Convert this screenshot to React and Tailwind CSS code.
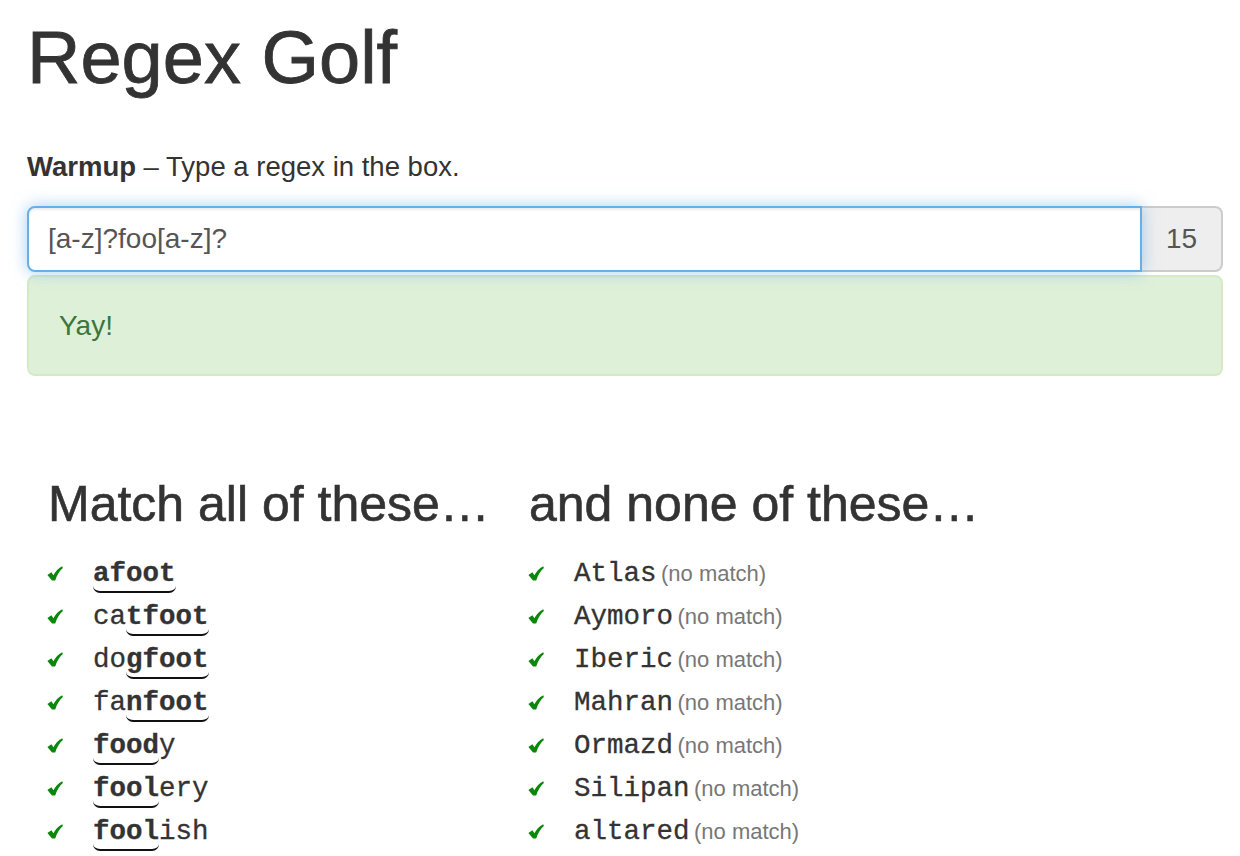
import React from "react";

const matches = [
  ["", "afoot", ""],
  ["ca", "tfoot", ""],
  ["do", "gfoot", ""],
  ["fa", "nfoot", ""],
  ["", "food", "y"],
  ["", "fool", "ery"],
  ["", "fool", "ish"],
];

const nonMatches = ["Atlas", "Aymoro", "Iberic", "Mahran", "Ormazd", "Silipan", "altared"];

function Check() {
  return (
    <span className="inline-block w-[45px] align-baseline">
      <svg width="16" height="15" viewBox="0 0 16 15" className="inline-block translate-x-[-1px] translate-y-[-3px]">
        <path
          d="M0.4 9 L4.4 6.2 L6.4 9.2 C8.6 5.4 11.2 2.4 15.2 0.3 L15.9 1.9 C12.6 4.7 10 8.6 8.2 14.4 L5 14.6 Z"
          fill="#0b870b"
        />
      </svg>
    </span>
  );
}

export default function App() {
  return (
    <div className="bg-white text-[#333333] font-['Liberation_Sans',Arial,sans-serif] pl-[27px] w-[1223px] min-h-[856px]">
      <h1 className="pt-[18px] text-[74px] leading-[80px] font-medium [-webkit-text-stroke:0.8px_#333333]">Regex Golf</h1>
      <p className="mt-[49px] text-[27.5px] leading-[40px]">
        <b className="font-bold">Warmup</b> – Type a regex in the box.
      </p>
      <div className="mt-[19px] flex h-[66px]">
        <div className="relative z-10 flex-1 flex items-center bg-white border-2 border-[#66afe9] rounded-l-[8px] pl-[19px] text-[28px] text-[#555555] shadow-[0_0_16px_rgba(102,175,233,0.6),inset_0_2px_2px_rgba(0,0,0,0.075)]">
          [a-z]?foo[a-z]?
        </div>
        <div className="w-[81px] flex items-center justify-center bg-[#eeeeee] border-2 border-l-0 border-[#cccccc] rounded-r-[8px] text-[28px] text-[#555555]">
          15
        </div>
      </div>
      <div className="mt-[3px] h-[101px] flex items-center bg-[#dff0d8] border-2 border-[#d6e9c6] rounded-[8px] pl-[30px] text-[28px] text-[#3c763d]">
        Yay!
      </div>
      <div className="mt-[98px] grid grid-cols-[481px_1fr] pl-[21px]">
        <div>
          <h2 className="text-[50px] leading-[60px] font-medium [-webkit-text-stroke:0.6px_#333333]">Match all of these…</h2>
          <ul className="mt-[18px]">
            {matches.map(([a, b, c], i) => (
              <li key={i} className="h-[43px] leading-[43px] whitespace-nowrap">
                <Check />
                <span className="font-['Liberation_Mono','Courier_New',monospace] text-[27.5px] [-webkit-text-stroke:0.3px_#333333]">
                  {a}
                  <span className="font-bold border-b-2 border-[#111111] rounded-b-[7px] pb-[2px]">{b}</span>
                  {c}
                </span>
              </li>
            ))}
          </ul>
        </div>
        <div>
          <h2 className="text-[50px] leading-[60px] font-medium [-webkit-text-stroke:0.6px_#333333]">and none of these…</h2>
          <ul className="mt-[18px]">
            {nonMatches.map((w, i) => (
              <li key={i} className="h-[43px] leading-[43px] whitespace-nowrap">
                <Check />
                <span className="font-['Liberation_Mono','Courier_New',monospace] text-[27.5px] [-webkit-text-stroke:0.3px_#333333]">{w}</span>{" "}
                <span className="text-[22px] text-[#777777]">(no match)</span>
              </li>
            ))}
          </ul>
        </div>
      </div>
    </div>
  );
}
